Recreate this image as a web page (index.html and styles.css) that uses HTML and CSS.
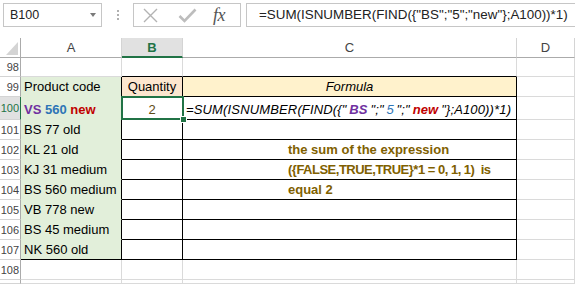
FILE: index.html
```html
<!DOCTYPE html>
<html lang="en">
<head>
  <meta charset="UTF-8">
  <title>FIND with array constant</title>
  <link rel="stylesheet" href="styles.css">
</head>
<body>
  <div class="formula-bar">
    <div class="name-box"><span>B100</span><span class="caret"></span></div>
    <div class="grip"><i></i><i></i><i></i></div>
    <div class="fx-buttons">
      <svg class="cancel" width="17" height="15" viewBox="0 0 17 15">
        <path d="M2 1 L15 14 M15 1 L2 14" stroke="#b3b3b3" stroke-width="1.4" fill="none"/>
      </svg>
      <svg class="enter" width="19" height="15" viewBox="0 0 19 15">
        <path d="M1.5 8 L6.5 13 L17.5 1.5" stroke="#bdbdbd" stroke-width="2.6" fill="none"/>
      </svg>
      <span class="fx">fx</span>
    </div>
    <div class="formula-input">=SUM(ISNUMBER(FIND({"BS";"5";"new"};A100))*1)</div>
  </div>

  <div class="sheet">
    <!-- column headers -->
    <div class="corner"><svg width="12" height="13" viewBox="0 0 12 13"><path d="M12 0 L12 13 L0 13 Z" fill="#d4d4d4"/></svg></div>
    <div class="ch">A</div>
    <div class="ch on">B</div>
    <div class="ch">C</div>
    <div class="ch">D</div>

    <!-- 98 -->
    <div class="rh">98</div>
    <div></div>
    <div class="top"></div>
    <div class="top"></div>
    <div></div>

    <!-- 99 -->
    <div class="rh">99</div>
    <div class="g">Product code</div>
    <div class="q bk mid">Quantity</div>
    <div class="fm bk mid">Formula</div>
    <div></div>

    <!-- 100 -->
    <div class="rh on">100</div>
    <div class="g b"><span class="pu">VS</span>&nbsp;<span class="bl">560</span>&nbsp;<span class="rd">new</span></div>
    <div class="bk mid active"><span class="num">2</span></div>
    <div class="bk code">=SUM(ISNUMBER(FIND({"<span class="pu b">&thinsp;BS&thinsp;</span>";"<span class="bl">&thinsp;5&thinsp;</span>";"<span class="rd b">&thinsp;new&thinsp;</span>"};A100))*1)</div>
    <div></div>

    <!-- 101 -->
    <div class="rh">101</div>
    <div class="g">BS 77 old</div>
    <div class="bk"></div>
    <div class="bk"></div>
    <div></div>

    <!-- 102 -->
    <div class="rh">102</div>
    <div class="g">KL 21 old</div>
    <div class="bk"></div>
    <div class="bk note">the sum of the expression</div>
    <div></div>

    <!-- 103 -->
    <div class="rh">103</div>
    <div class="g">KJ 31 medium</div>
    <div class="bk"></div>
    <div class="bk note tight">({FALSE,TRUE,TRUE}*1 = 0, 1, 1)&nbsp; is</div>
    <div></div>

    <!-- 104 -->
    <div class="rh">104</div>
    <div class="g">BS 560 medium</div>
    <div class="bk"></div>
    <div class="bk note">equal 2</div>
    <div></div>

    <!-- 105 -->
    <div class="rh">105</div>
    <div class="g">VB 778 new</div>
    <div class="bk"></div>
    <div class="bk"></div>
    <div></div>

    <!-- 106 -->
    <div class="rh">106</div>
    <div class="g">BS 45 medium</div>
    <div class="bk"></div>
    <div class="bk"></div>
    <div></div>

    <!-- 107 -->
    <div class="rh">107</div>
    <div class="g last">NK 560 old</div>
    <div class="bk"></div>
    <div class="bk"></div>
    <div></div>

    <!-- 108 -->
    <div class="rh">108</div>
    <div></div>
    <div></div>
    <div></div>
    <div></div>

    <!-- 109, only its top edge shows -->
    <div class="rh"></div>
    <div></div>
    <div></div>
    <div></div>
    <div></div>
  </div>
</body>
</html>
```

FILE: styles.css
```css
/* page */
body {
  margin: 0;
  width: 575px;
  height: 284px;
  overflow: hidden;
  background: #ffffff;
  font-family: "Liberation Sans", Arial, sans-serif;
  color: #000000;
}

/* formula bar */
.formula-bar {
  display: flex;
  align-items: flex-start;
  height: 38px;
  padding-top: 3px;
  box-sizing: border-box;
}
.name-box {
  margin-left: 3px;
  width: 99px;
  height: 24px;
  box-sizing: border-box;
  border: 1px solid #c6c6c6;
  display: flex;
  align-items: center;
  justify-content: space-between;
  padding: 0 5px 0 6px;
  font-size: 12.5px;
  color: #222222;
}
.caret {
  width: 0;
  height: 0;
  border-left: 3.5px solid transparent;
  border-right: 3.5px solid transparent;
  border-top: 4px solid #7a7a7a;
}
.grip {
  width: 31px;
  height: 24px;
  box-sizing: border-box;
  padding-top: 7px;
  display: flex;
  flex-direction: column;
  align-items: center;
  gap: 2px;
}
.grip i {
  width: 2px;
  height: 2px;
  background: #b0b0b0;
}
.fx-buttons {
  width: 108px;
  height: 24px;
  box-sizing: border-box;
  border: 1px solid #c6c6c6;
  display: flex;
  align-items: center;
  padding-left: 8px;
}
.enter {
  margin-left: 19px;
}
.fx {
  margin-left: 16px;
  font-family: "Liberation Serif", "Times New Roman", serif;
  font-style: italic;
  font-size: 18px;
  color: #555555;
  letter-spacing: -0.5px;
}
.formula-input {
  flex: 1;
  margin-left: 5px;
  height: 24px;
  box-sizing: border-box;
  border: 1px solid #c6c6c6;
  border-right: none;
  padding-left: 12px;
  font-size: 13.4px;
  line-height: 22px;
  color: #222222;
  white-space: nowrap;
}

/* worksheet grid */
.sheet {
  display: grid;
  grid-template-columns: 21px 101px 61px 334px 1fr;
  grid-template-rows: 20px 19px 20px 23px repeat(8, 20px) 4px;
  height: 246px;
  overflow: hidden;
  font-size: 13px;
}
.sheet > div {
  box-sizing: border-box;
  border-right: 1px solid #dadada;
  border-bottom: 1px solid #dadada;
  display: flex;
  align-items: flex-end;
  padding: 0 3px 2px;
  white-space: nowrap;
  min-width: 0;
}

/* headers */
.sheet > .corner {
  align-items: flex-end;
  justify-content: flex-end;
  padding: 0 2px 2px 0;
  border-bottom-color: #ababab;
  border-right-color: #ababab;
}
.sheet > .ch {
  justify-content: center;
  align-items: center;
  padding: 0;
  color: #444444;
  border-bottom-color: #ababab;
  border-right-color: #d4d4d4;
}
.sheet > .ch.on {
  background: #e1e1e1;
  color: #217346;
  font-weight: bold;
  border-bottom: 2px solid #217346;
}
.sheet > .rh {
  justify-content: flex-end;
  align-items: center;
  padding: 0 1px 0 0;
  font-size: 11px;
  color: #444444;
  border-right-color: #ababab;
  border-bottom-color: #d4d4d4;
}
.sheet > .rh.on {
  background: #e1e1e1;
  color: #217346;
  border-right-color: #217346;
}

/* table cells */
.sheet > .g {
  background: #e2efda;
  border-bottom-color: #e2efda;
  border-right-color: #000000;
}
.sheet > .g.last {
  border-bottom-color: #000000;
}
.sheet > .top {
  border-bottom-color: #000000;
}
.sheet > .bk {
  border-right-color: #000000;
  border-bottom-color: #000000;
}
.sheet > .mid {
  justify-content: center;
}
.sheet > .q {
  background: #fce6cf;
}
.sheet > .fm {
  background: #fff2cc;
  font-style: italic;
}
.sheet > .code {
  font-style: italic;
  padding-left: 3px;
  letter-spacing: 0.15px;
}
.sheet > .note {
  padding-left: 105px;
  color: #7f6000;
  font-weight: bold;
}
.sheet > .note.tight {
  letter-spacing: -0.5px;
}
.num {
  color: #5e4b14;
}
.b {
  font-weight: bold;
}
.pu {
  color: #7030a0;
}
.bl {
  color: #2e75b6;
}
.rd {
  color: #c00000;
}

/* active cell frame with fill handle */
.sheet > .active {
  position: relative;
  z-index: 1;
  overflow: visible;
}
.active::after {
  content: "";
  position: absolute;
  left: -1px;
  top: -1px;
  right: -2px;
  bottom: -1px;
  border: 2px solid #217346;
}
.active::before {
  content: "";
  position: absolute;
  right: -5px;
  bottom: -4px;
  width: 5px;
  height: 5px;
  background: #217346;
  border: 1px solid #ffffff;
  z-index: 2;
}
```
